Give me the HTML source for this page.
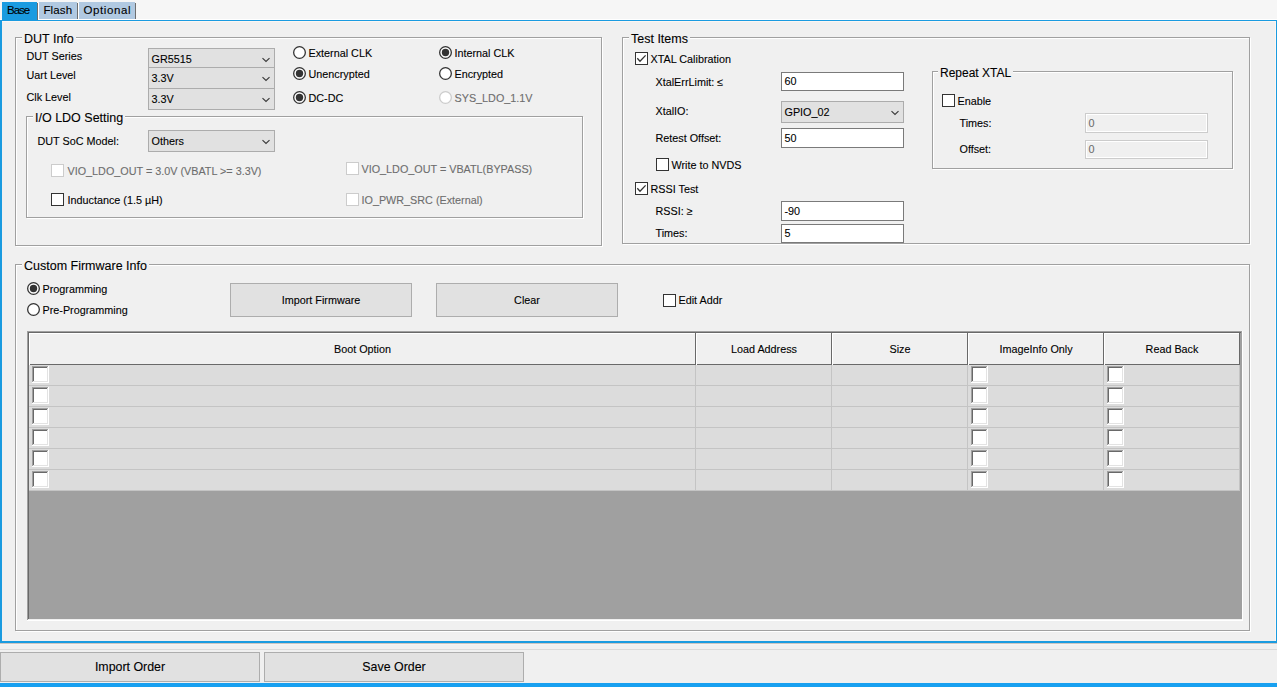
<!DOCTYPE html>
<html><head><meta charset="utf-8"><style>
html,body{margin:0;padding:0;}
body{width:1277px;height:687px;overflow:hidden;background:#f0f0f0;position:relative;font-family:"Liberation Sans",sans-serif;}
div,svg{position:absolute;box-sizing:content-box;}
.t{line-height:12px;white-space:nowrap;-webkit-text-stroke:0.1px currentColor;}
</style></head><body>
<div style="left:0px;top:0px;width:1277px;height:19px;background:#f6f6f6;"></div>
<div style="left:0px;top:19px;width:1277px;height:1px;background:#ffffff;"></div>
<div style="left:2px;top:2px;width:35px;height:18px;background:#1a9be0;"></div>
<div style="left:37px;top:3px;width:1px;height:17px;background:#6e6e6e;"></div>
<div class="t" style="left:7.0px;top:4px;font-size:11.5px;color:#000;letter-spacing:-1px;">Base</div>
<div style="left:39px;top:2px;width:38px;height:17px;background:#b1c9e1;"></div>
<div style="left:38px;top:3px;width:1px;height:16px;background:#ffffff;"></div>
<div style="left:77px;top:3px;width:1px;height:16px;background:#6e6e6e;"></div>
<div class="t" style="left:43.5px;top:4px;font-size:11.5px;color:#000;letter-spacing:0.1px;">Flash</div>
<div style="left:79px;top:2px;width:56px;height:17px;background:#b1c9e1;"></div>
<div style="left:78px;top:3px;width:1px;height:16px;background:#ffffff;"></div>
<div style="left:135px;top:3px;width:1px;height:16px;background:#6e6e6e;"></div>
<div class="t" style="left:83.5px;top:4px;font-size:11.5px;color:#000;letter-spacing:0.6px;">Optional</div>
<div style="left:0px;top:20px;width:1277px;height:1px;background:#1a9be0;"></div>
<div style="left:0px;top:20px;width:2px;height:623px;background:#1a9be0;"></div>
<div style="left:1276px;top:20px;width:1px;height:623px;background:#1a9be0;"></div>
<div style="left:0px;top:641px;width:1277px;height:2px;background:#1a9be0;"></div>
<div style="left:2px;top:21px;width:1274px;height:1px;background:#fdf6f2;"></div>
<div style="left:1275px;top:21px;width:1px;height:620px;background:#fdf6f2;"></div>
<div style="left:0px;top:643px;width:1277px;height:1px;background:#cdc6c1;"></div>
<div style="left:0px;top:644px;width:1277px;height:1px;background:#f4f4f4;"></div>
<div style="left:0px;top:649px;width:1277px;height:1px;background:#dadada;"></div>
<div style="left:0px;top:683px;width:1277px;height:4px;background:#18a0f0;"></div>
<div style="left:16px;top:38px;width:587px;height:209px;border:1px solid #fff;width:585px;height:207px;"></div>
<div style="left:15px;top:37px;width:587px;height:209px;border:1px solid #a0a0a0;width:585px;height:207px;"></div>
<div class="t" style="left:22px;top:33px;font-size:12.5px;background:#f0f0f0;padding:0 2px 0 2px;">DUT Info</div>
<div class="t" style="left:26.5px;top:50px;font-size:10.8px;color:#000;">DUT Series</div>
<div class="t" style="left:26.5px;top:69px;font-size:10.8px;color:#000;">Uart Level</div>
<div class="t" style="left:26.5px;top:91px;font-size:10.8px;color:#000;">Clk Level</div>
<div style="left:148px;top:48px;width:127px;height:20px;background:#e1e1e1;border:1px solid #acacac;width:125px;height:18px;"></div>
<div class="t" style="left:151.5px;top:53px;font-size:10.8px;color:#000;">GR5515</div>
<svg style="left:262px;top:57px;" width="9" height="7" viewBox="0 0 9 7"><path d="M0.5 1.1 L4 4.5 L7.5 1.1" fill="none" stroke="#3a3a3a" stroke-width="1.15"/></svg>
<div style="left:148px;top:67px;width:127px;height:22px;background:#e1e1e1;border:1px solid #acacac;width:125px;height:20px;"></div>
<div class="t" style="left:151.5px;top:72px;font-size:10.8px;color:#000;">3.3V</div>
<svg style="left:262px;top:76px;" width="9" height="7" viewBox="0 0 9 7"><path d="M0.5 1.1 L4 4.5 L7.5 1.1" fill="none" stroke="#3a3a3a" stroke-width="1.15"/></svg>
<div style="left:148px;top:88px;width:127px;height:22px;background:#e1e1e1;border:1px solid #acacac;width:125px;height:20px;"></div>
<div class="t" style="left:151.5px;top:93px;font-size:10.8px;color:#000;">3.3V</div>
<svg style="left:262px;top:97px;" width="9" height="7" viewBox="0 0 9 7"><path d="M0.5 1.1 L4 4.5 L7.5 1.1" fill="none" stroke="#3a3a3a" stroke-width="1.15"/></svg>
<svg style="left:292px;top:45px;" width="15" height="15" viewBox="0 0 15 15"><circle cx="7.5" cy="7.5" r="5.85" fill="#fff" stroke="#333333" stroke-width="1.3"/></svg>
<div class="t" style="left:308.5px;top:47px;font-size:10.8px;color:#000;">External CLK</div>
<svg style="left:292px;top:66px;" width="15" height="15" viewBox="0 0 15 15"><circle cx="7.5" cy="7.5" r="5.85" fill="#fff" stroke="#333333" stroke-width="1.3"/><circle cx="7.5" cy="7.5" r="3.7" fill="#333333"/></svg>
<div class="t" style="left:308.5px;top:68px;font-size:10.8px;color:#000;">Unencrypted</div>
<svg style="left:292px;top:90px;" width="15" height="15" viewBox="0 0 15 15"><circle cx="7.5" cy="7.5" r="5.85" fill="#fff" stroke="#333333" stroke-width="1.3"/><circle cx="7.5" cy="7.5" r="3.7" fill="#333333"/></svg>
<div class="t" style="left:308.5px;top:92px;font-size:10.8px;color:#000;">DC-DC</div>
<svg style="left:438px;top:45px;" width="15" height="15" viewBox="0 0 15 15"><circle cx="7.5" cy="7.5" r="5.85" fill="#fff" stroke="#333333" stroke-width="1.3"/><circle cx="7.5" cy="7.5" r="3.7" fill="#333333"/></svg>
<div class="t" style="left:454.5px;top:47px;font-size:10.8px;color:#000;">Internal CLK</div>
<svg style="left:438px;top:66px;" width="15" height="15" viewBox="0 0 15 15"><circle cx="7.5" cy="7.5" r="5.85" fill="#fff" stroke="#333333" stroke-width="1.3"/></svg>
<div class="t" style="left:454.5px;top:68px;font-size:10.8px;color:#000;">Encrypted</div>
<svg style="left:438px;top:90px;" width="15" height="15" viewBox="0 0 15 15"><circle cx="7.5" cy="7.5" r="5.85" fill="#fff" stroke="#cccccc" stroke-width="1.3"/></svg>
<div class="t" style="left:454.5px;top:92px;font-size:10.8px;color:#6d6d6d;">SYS_LDO_1.1V</div>
<div style="left:27px;top:117px;width:557px;height:102px;border:1px solid #fff;width:555px;height:100px;"></div>
<div style="left:26px;top:116px;width:557px;height:102px;border:1px solid #a0a0a0;width:555px;height:100px;"></div>
<div class="t" style="left:33px;top:112px;font-size:12.5px;background:#f0f0f0;padding:0 2px 0 2px;">I/O LDO Setting</div>
<div class="t" style="left:37.5px;top:135px;font-size:10.8px;color:#000;">DUT SoC Model:</div>
<div style="left:148px;top:130px;width:127px;height:22px;background:#e1e1e1;border:1px solid #acacac;width:125px;height:20px;"></div>
<div class="t" style="left:151.5px;top:135px;font-size:10.8px;color:#000;">Others</div>
<svg style="left:262px;top:139px;" width="9" height="7" viewBox="0 0 9 7"><path d="M0.5 1.1 L4 4.5 L7.5 1.1" fill="none" stroke="#3a3a3a" stroke-width="1.15"/></svg>
<div style="left:51px;top:164px;width:13px;height:13px;background:#fff;border:1px solid #cccccc;width:11px;height:11px;"></div>
<div class="t" style="left:67.5px;top:165px;font-size:10.8px;color:#6d6d6d;">VIO_LDO_OUT = 3.0V (VBATL &gt;= 3.3V)</div>
<div style="left:51px;top:193px;width:13px;height:13px;background:#fff;border:1px solid #333333;width:11px;height:11px;"></div>
<div class="t" style="left:67.5px;top:194px;font-size:10.8px;color:#000;">Inductance (1.5 µH)</div>
<div style="left:346px;top:162px;width:13px;height:13px;background:#fff;border:1px solid #cccccc;width:11px;height:11px;"></div>
<div class="t" style="left:361.5px;top:163px;font-size:10.8px;color:#6d6d6d;">VIO_LDO_OUT = VBATL(BYPASS)</div>
<div style="left:346px;top:193px;width:13px;height:13px;background:#fff;border:1px solid #cccccc;width:11px;height:11px;"></div>
<div class="t" style="left:361.5px;top:194px;font-size:10.8px;color:#6d6d6d;">IO_PWR_SRC (External)</div>
<div style="left:623px;top:38px;width:628px;height:207px;border:1px solid #fff;width:626px;height:205px;"></div>
<div style="left:622px;top:37px;width:628px;height:207px;border:1px solid #a0a0a0;width:626px;height:205px;"></div>
<div class="t" style="left:629px;top:33px;font-size:12.5px;background:#f0f0f0;padding:0 2px 0 2px;">Test Items</div>
<div style="left:635px;top:52px;width:13px;height:13px;background:#fff;border:1px solid #333333;width:11px;height:11px;"></div>
<svg style="left:635px;top:52px;" width="13" height="13" viewBox="0 0 13 13"><path d="M2.3 6.3 L5 9.2 L10.6 3.4" fill="none" stroke="#333" stroke-width="1.3"/></svg>
<div class="t" style="left:650.5px;top:53px;font-size:10.8px;color:#000;">XTAL Calibration</div>
<div class="t" style="left:655.5px;top:76px;font-size:10.8px;color:#000;">XtalErrLimit: ≤</div>
<div style="left:781px;top:72px;width:123px;height:19px;background:#fff;border:1px solid #7a7a7a;width:121px;height:17px;"></div>
<div class="t" style="left:784.5px;top:75px;font-size:10.8px;color:#000;">60</div>
<div class="t" style="left:655.5px;top:105px;font-size:10.8px;color:#000;">XtalIO:</div>
<div style="left:781px;top:101px;width:123px;height:22px;background:#e1e1e1;border:1px solid #acacac;width:121px;height:20px;"></div>
<div class="t" style="left:784.5px;top:106px;font-size:10.8px;color:#000;">GPIO_02</div>
<svg style="left:891px;top:110px;" width="9" height="7" viewBox="0 0 9 7"><path d="M0.5 1.1 L4 4.5 L7.5 1.1" fill="none" stroke="#3a3a3a" stroke-width="1.15"/></svg>
<div class="t" style="left:655.5px;top:132px;font-size:10.8px;color:#000;">Retest Offset:</div>
<div style="left:781px;top:128px;width:123px;height:20px;background:#fff;border:1px solid #7a7a7a;width:121px;height:18px;"></div>
<div class="t" style="left:784.5px;top:132px;font-size:10.8px;color:#000;">50</div>
<div style="left:656px;top:158px;width:13px;height:13px;background:#fff;border:1px solid #333333;width:11px;height:11px;"></div>
<div class="t" style="left:671.5px;top:159px;font-size:10.8px;color:#000;">Write to NVDS</div>
<div style="left:635px;top:182px;width:13px;height:13px;background:#fff;border:1px solid #333333;width:11px;height:11px;"></div>
<svg style="left:635px;top:182px;" width="13" height="13" viewBox="0 0 13 13"><path d="M2.3 6.3 L5 9.2 L10.6 3.4" fill="none" stroke="#333" stroke-width="1.3"/></svg>
<div class="t" style="left:650.5px;top:183px;font-size:10.8px;color:#000;">RSSI Test</div>
<div class="t" style="left:655.5px;top:205px;font-size:10.8px;color:#000;">RSSI: ≥</div>
<div style="left:781px;top:201px;width:123px;height:20px;background:#fff;border:1px solid #7a7a7a;width:121px;height:18px;"></div>
<div class="t" style="left:784.5px;top:205px;font-size:10.8px;color:#000;">-90</div>
<div class="t" style="left:655.5px;top:227px;font-size:10.8px;color:#000;">Times:</div>
<div style="left:781px;top:224px;width:123px;height:19px;background:#fff;border:1px solid #7a7a7a;width:121px;height:17px;"></div>
<div class="t" style="left:784.5px;top:227px;font-size:10.8px;color:#000;">5</div>
<div style="left:933px;top:72px;width:301px;height:98px;border:1px solid #fff;width:299px;height:96px;"></div>
<div style="left:932px;top:71px;width:301px;height:98px;border:1px solid #a0a0a0;width:299px;height:96px;"></div>
<div class="t" style="left:938px;top:67px;font-size:12px;background:#f0f0f0;padding:0 2px 0 2px;">Repeat XTAL</div>
<div style="left:942px;top:94px;width:13px;height:13px;background:#fff;border:1px solid #333333;width:11px;height:11px;"></div>
<div class="t" style="left:957.5px;top:95px;font-size:10.8px;color:#000;">Enable</div>
<div class="t" style="left:959.5px;top:117px;font-size:10.8px;color:#000;">Times:</div>
<div class="t" style="left:959.5px;top:143px;font-size:10.8px;color:#000;">Offset:</div>
<div style="left:1085px;top:113px;width:123px;height:20px;background:#f0f0f0;border:1px solid #cccccc;width:121px;height:18px;box-shadow:inset 0 0 0 1px #fff;"></div>
<div class="t" style="left:1088.5px;top:117px;font-size:10.8px;color:#6d6d6d;">0</div>
<div style="left:1085px;top:140px;width:123px;height:19px;background:#f0f0f0;border:1px solid #cccccc;width:121px;height:17px;box-shadow:inset 0 0 0 1px #fff;"></div>
<div class="t" style="left:1088.5px;top:143px;font-size:10.8px;color:#6d6d6d;">0</div>
<div style="left:16px;top:265px;width:1235px;height:367px;border:1px solid #fff;width:1233px;height:365px;"></div>
<div style="left:15px;top:264px;width:1235px;height:367px;border:1px solid #a0a0a0;width:1233px;height:365px;"></div>
<div class="t" style="left:22px;top:260px;font-size:12.5px;background:#f0f0f0;padding:0 2px 0 2px;">Custom Firmware Info</div>
<svg style="left:26px;top:281px;" width="15" height="15" viewBox="0 0 15 15"><circle cx="7.5" cy="7.5" r="5.85" fill="#fff" stroke="#333333" stroke-width="1.3"/><circle cx="7.5" cy="7.5" r="3.7" fill="#333333"/></svg>
<div class="t" style="left:42.5px;top:283px;font-size:10.8px;color:#000;">Programming</div>
<svg style="left:26px;top:302px;" width="15" height="15" viewBox="0 0 15 15"><circle cx="7.5" cy="7.5" r="5.85" fill="#fff" stroke="#333333" stroke-width="1.3"/></svg>
<div class="t" style="left:42.5px;top:304px;font-size:10.8px;color:#000;">Pre-Programming</div>
<div style="left:230px;top:283px;width:182px;height:34px;background:#e1e1e1;border:1px solid #adadad;width:180px;height:32px;"></div>
<div class="t" style="left:230px;top:294px;width:182px;text-align:center;font-size:10.8px;color:#000">Import Firmware</div>
<div style="left:436px;top:283px;width:182px;height:34px;background:#e1e1e1;border:1px solid #adadad;width:180px;height:32px;"></div>
<div class="t" style="left:436px;top:294px;width:182px;text-align:center;font-size:10.8px;color:#000">Clear</div>
<div style="left:663px;top:294px;width:13px;height:13px;background:#fff;border:1px solid #333333;width:11px;height:11px;"></div>
<div class="t" style="left:678.5px;top:294px;font-size:10.8px;color:#000;">Edit Addr</div>
<div style="left:27px;top:331px;width:1216px;height:290px;background:#ffffff;"></div>
<div style="left:27px;top:331px;width:1215px;height:289px;background:#a0a0a0;"></div>
<div style="left:27px;top:331px;width:1215px;height:1px;background:#a0a0a0;"></div>
<div style="left:27px;top:331px;width:1px;height:289px;background:#a0a0a0;"></div>
<div style="left:28px;top:332px;width:1213px;height:1px;background:#696969;"></div>
<div style="left:28px;top:332px;width:1px;height:287px;background:#696969;"></div>
<div style="left:28px;top:619px;width:1214px;height:1px;background:#f0f0f0;"></div>
<div style="left:29px;top:333px;width:667px;height:32px;background:#f0f0f0;"></div>
<div style="left:29px;top:333px;width:666px;height:1px;background:#ffffff;"></div>
<div style="left:29px;top:333px;width:1px;height:32px;background:#ffffff;"></div>
<div style="left:695px;top:333px;width:1px;height:32px;background:#696969;"></div>
<div style="left:30px;top:364px;width:666px;height:1px;background:#696969;"></div>
<div class="t" style="left:29px;top:343px;width:667px;text-align:center;font-size:10.8px;color:#000">Boot Option</div>
<div style="left:696px;top:333px;width:136px;height:32px;background:#f0f0f0;"></div>
<div style="left:696px;top:333px;width:135px;height:1px;background:#ffffff;"></div>
<div style="left:696px;top:333px;width:1px;height:32px;background:#ffffff;"></div>
<div style="left:831px;top:333px;width:1px;height:32px;background:#696969;"></div>
<div style="left:697px;top:364px;width:135px;height:1px;background:#696969;"></div>
<div class="t" style="left:696px;top:343px;width:136px;text-align:center;font-size:10.8px;color:#000">Load Address</div>
<div style="left:832px;top:333px;width:136px;height:32px;background:#f0f0f0;"></div>
<div style="left:832px;top:333px;width:135px;height:1px;background:#ffffff;"></div>
<div style="left:832px;top:333px;width:1px;height:32px;background:#ffffff;"></div>
<div style="left:967px;top:333px;width:1px;height:32px;background:#696969;"></div>
<div style="left:833px;top:364px;width:135px;height:1px;background:#696969;"></div>
<div class="t" style="left:832px;top:343px;width:136px;text-align:center;font-size:10.8px;color:#000">Size</div>
<div style="left:968px;top:333px;width:136px;height:32px;background:#f0f0f0;"></div>
<div style="left:968px;top:333px;width:135px;height:1px;background:#ffffff;"></div>
<div style="left:968px;top:333px;width:1px;height:32px;background:#ffffff;"></div>
<div style="left:1103px;top:333px;width:1px;height:32px;background:#696969;"></div>
<div style="left:969px;top:364px;width:135px;height:1px;background:#696969;"></div>
<div class="t" style="left:968px;top:343px;width:136px;text-align:center;font-size:10.8px;color:#000">ImageInfo Only</div>
<div style="left:1104px;top:333px;width:136px;height:32px;background:#f0f0f0;"></div>
<div style="left:1104px;top:333px;width:135px;height:1px;background:#ffffff;"></div>
<div style="left:1104px;top:333px;width:1px;height:32px;background:#ffffff;"></div>
<div style="left:1239px;top:333px;width:1px;height:32px;background:#696969;"></div>
<div style="left:1105px;top:364px;width:135px;height:1px;background:#696969;"></div>
<div class="t" style="left:1104px;top:343px;width:136px;text-align:center;font-size:10.8px;color:#000">Read Back</div>
<div style="left:29px;top:365px;width:667px;height:21px;background:#dcdcdc;"></div>
<div style="left:29px;top:385px;width:667px;height:1px;background:#c4c4c4;"></div>
<div style="left:695px;top:365px;width:1px;height:21px;background:#c4c4c4;"></div>
<div style="left:32px;top:366px;width:17px;height:17px;background:#fff;"></div>
<div style="left:32px;top:366px;width:16px;height:1px;background:#a0a0a0;"></div>
<div style="left:32px;top:366px;width:1px;height:16px;background:#a0a0a0;"></div>
<div style="left:33px;top:367px;width:14px;height:1px;background:#696969;"></div>
<div style="left:33px;top:367px;width:1px;height:14px;background:#696969;"></div>
<div style="left:33px;top:381px;width:15px;height:1px;background:#e3e3e3;"></div>
<div style="left:47px;top:367px;width:1px;height:15px;background:#e3e3e3;"></div>
<div style="left:696px;top:365px;width:136px;height:21px;background:#dcdcdc;"></div>
<div style="left:696px;top:385px;width:136px;height:1px;background:#c4c4c4;"></div>
<div style="left:831px;top:365px;width:1px;height:21px;background:#c4c4c4;"></div>
<div style="left:832px;top:365px;width:136px;height:21px;background:#dcdcdc;"></div>
<div style="left:832px;top:385px;width:136px;height:1px;background:#c4c4c4;"></div>
<div style="left:967px;top:365px;width:1px;height:21px;background:#c4c4c4;"></div>
<div style="left:968px;top:365px;width:136px;height:21px;background:#dcdcdc;"></div>
<div style="left:968px;top:385px;width:136px;height:1px;background:#c4c4c4;"></div>
<div style="left:1103px;top:365px;width:1px;height:21px;background:#c4c4c4;"></div>
<div style="left:971px;top:366px;width:17px;height:17px;background:#fff;"></div>
<div style="left:971px;top:366px;width:16px;height:1px;background:#a0a0a0;"></div>
<div style="left:971px;top:366px;width:1px;height:16px;background:#a0a0a0;"></div>
<div style="left:972px;top:367px;width:14px;height:1px;background:#696969;"></div>
<div style="left:972px;top:367px;width:1px;height:14px;background:#696969;"></div>
<div style="left:972px;top:381px;width:15px;height:1px;background:#e3e3e3;"></div>
<div style="left:986px;top:367px;width:1px;height:15px;background:#e3e3e3;"></div>
<div style="left:1104px;top:365px;width:136px;height:21px;background:#dcdcdc;"></div>
<div style="left:1104px;top:385px;width:136px;height:1px;background:#c4c4c4;"></div>
<div style="left:1239px;top:365px;width:1px;height:21px;background:#c4c4c4;"></div>
<div style="left:1107px;top:366px;width:17px;height:17px;background:#fff;"></div>
<div style="left:1107px;top:366px;width:16px;height:1px;background:#a0a0a0;"></div>
<div style="left:1107px;top:366px;width:1px;height:16px;background:#a0a0a0;"></div>
<div style="left:1108px;top:367px;width:14px;height:1px;background:#696969;"></div>
<div style="left:1108px;top:367px;width:1px;height:14px;background:#696969;"></div>
<div style="left:1108px;top:381px;width:15px;height:1px;background:#e3e3e3;"></div>
<div style="left:1122px;top:367px;width:1px;height:15px;background:#e3e3e3;"></div>
<div style="left:29px;top:386px;width:667px;height:21px;background:#dcdcdc;"></div>
<div style="left:29px;top:406px;width:667px;height:1px;background:#c4c4c4;"></div>
<div style="left:695px;top:386px;width:1px;height:21px;background:#c4c4c4;"></div>
<div style="left:32px;top:387px;width:17px;height:17px;background:#fff;"></div>
<div style="left:32px;top:387px;width:16px;height:1px;background:#a0a0a0;"></div>
<div style="left:32px;top:387px;width:1px;height:16px;background:#a0a0a0;"></div>
<div style="left:33px;top:388px;width:14px;height:1px;background:#696969;"></div>
<div style="left:33px;top:388px;width:1px;height:14px;background:#696969;"></div>
<div style="left:33px;top:402px;width:15px;height:1px;background:#e3e3e3;"></div>
<div style="left:47px;top:388px;width:1px;height:15px;background:#e3e3e3;"></div>
<div style="left:696px;top:386px;width:136px;height:21px;background:#dcdcdc;"></div>
<div style="left:696px;top:406px;width:136px;height:1px;background:#c4c4c4;"></div>
<div style="left:831px;top:386px;width:1px;height:21px;background:#c4c4c4;"></div>
<div style="left:832px;top:386px;width:136px;height:21px;background:#dcdcdc;"></div>
<div style="left:832px;top:406px;width:136px;height:1px;background:#c4c4c4;"></div>
<div style="left:967px;top:386px;width:1px;height:21px;background:#c4c4c4;"></div>
<div style="left:968px;top:386px;width:136px;height:21px;background:#dcdcdc;"></div>
<div style="left:968px;top:406px;width:136px;height:1px;background:#c4c4c4;"></div>
<div style="left:1103px;top:386px;width:1px;height:21px;background:#c4c4c4;"></div>
<div style="left:971px;top:387px;width:17px;height:17px;background:#fff;"></div>
<div style="left:971px;top:387px;width:16px;height:1px;background:#a0a0a0;"></div>
<div style="left:971px;top:387px;width:1px;height:16px;background:#a0a0a0;"></div>
<div style="left:972px;top:388px;width:14px;height:1px;background:#696969;"></div>
<div style="left:972px;top:388px;width:1px;height:14px;background:#696969;"></div>
<div style="left:972px;top:402px;width:15px;height:1px;background:#e3e3e3;"></div>
<div style="left:986px;top:388px;width:1px;height:15px;background:#e3e3e3;"></div>
<div style="left:1104px;top:386px;width:136px;height:21px;background:#dcdcdc;"></div>
<div style="left:1104px;top:406px;width:136px;height:1px;background:#c4c4c4;"></div>
<div style="left:1239px;top:386px;width:1px;height:21px;background:#c4c4c4;"></div>
<div style="left:1107px;top:387px;width:17px;height:17px;background:#fff;"></div>
<div style="left:1107px;top:387px;width:16px;height:1px;background:#a0a0a0;"></div>
<div style="left:1107px;top:387px;width:1px;height:16px;background:#a0a0a0;"></div>
<div style="left:1108px;top:388px;width:14px;height:1px;background:#696969;"></div>
<div style="left:1108px;top:388px;width:1px;height:14px;background:#696969;"></div>
<div style="left:1108px;top:402px;width:15px;height:1px;background:#e3e3e3;"></div>
<div style="left:1122px;top:388px;width:1px;height:15px;background:#e3e3e3;"></div>
<div style="left:29px;top:407px;width:667px;height:21px;background:#dcdcdc;"></div>
<div style="left:29px;top:427px;width:667px;height:1px;background:#c4c4c4;"></div>
<div style="left:695px;top:407px;width:1px;height:21px;background:#c4c4c4;"></div>
<div style="left:32px;top:408px;width:17px;height:17px;background:#fff;"></div>
<div style="left:32px;top:408px;width:16px;height:1px;background:#a0a0a0;"></div>
<div style="left:32px;top:408px;width:1px;height:16px;background:#a0a0a0;"></div>
<div style="left:33px;top:409px;width:14px;height:1px;background:#696969;"></div>
<div style="left:33px;top:409px;width:1px;height:14px;background:#696969;"></div>
<div style="left:33px;top:423px;width:15px;height:1px;background:#e3e3e3;"></div>
<div style="left:47px;top:409px;width:1px;height:15px;background:#e3e3e3;"></div>
<div style="left:696px;top:407px;width:136px;height:21px;background:#dcdcdc;"></div>
<div style="left:696px;top:427px;width:136px;height:1px;background:#c4c4c4;"></div>
<div style="left:831px;top:407px;width:1px;height:21px;background:#c4c4c4;"></div>
<div style="left:832px;top:407px;width:136px;height:21px;background:#dcdcdc;"></div>
<div style="left:832px;top:427px;width:136px;height:1px;background:#c4c4c4;"></div>
<div style="left:967px;top:407px;width:1px;height:21px;background:#c4c4c4;"></div>
<div style="left:968px;top:407px;width:136px;height:21px;background:#dcdcdc;"></div>
<div style="left:968px;top:427px;width:136px;height:1px;background:#c4c4c4;"></div>
<div style="left:1103px;top:407px;width:1px;height:21px;background:#c4c4c4;"></div>
<div style="left:971px;top:408px;width:17px;height:17px;background:#fff;"></div>
<div style="left:971px;top:408px;width:16px;height:1px;background:#a0a0a0;"></div>
<div style="left:971px;top:408px;width:1px;height:16px;background:#a0a0a0;"></div>
<div style="left:972px;top:409px;width:14px;height:1px;background:#696969;"></div>
<div style="left:972px;top:409px;width:1px;height:14px;background:#696969;"></div>
<div style="left:972px;top:423px;width:15px;height:1px;background:#e3e3e3;"></div>
<div style="left:986px;top:409px;width:1px;height:15px;background:#e3e3e3;"></div>
<div style="left:1104px;top:407px;width:136px;height:21px;background:#dcdcdc;"></div>
<div style="left:1104px;top:427px;width:136px;height:1px;background:#c4c4c4;"></div>
<div style="left:1239px;top:407px;width:1px;height:21px;background:#c4c4c4;"></div>
<div style="left:1107px;top:408px;width:17px;height:17px;background:#fff;"></div>
<div style="left:1107px;top:408px;width:16px;height:1px;background:#a0a0a0;"></div>
<div style="left:1107px;top:408px;width:1px;height:16px;background:#a0a0a0;"></div>
<div style="left:1108px;top:409px;width:14px;height:1px;background:#696969;"></div>
<div style="left:1108px;top:409px;width:1px;height:14px;background:#696969;"></div>
<div style="left:1108px;top:423px;width:15px;height:1px;background:#e3e3e3;"></div>
<div style="left:1122px;top:409px;width:1px;height:15px;background:#e3e3e3;"></div>
<div style="left:29px;top:428px;width:667px;height:21px;background:#dcdcdc;"></div>
<div style="left:29px;top:448px;width:667px;height:1px;background:#c4c4c4;"></div>
<div style="left:695px;top:428px;width:1px;height:21px;background:#c4c4c4;"></div>
<div style="left:32px;top:429px;width:17px;height:17px;background:#fff;"></div>
<div style="left:32px;top:429px;width:16px;height:1px;background:#a0a0a0;"></div>
<div style="left:32px;top:429px;width:1px;height:16px;background:#a0a0a0;"></div>
<div style="left:33px;top:430px;width:14px;height:1px;background:#696969;"></div>
<div style="left:33px;top:430px;width:1px;height:14px;background:#696969;"></div>
<div style="left:33px;top:444px;width:15px;height:1px;background:#e3e3e3;"></div>
<div style="left:47px;top:430px;width:1px;height:15px;background:#e3e3e3;"></div>
<div style="left:696px;top:428px;width:136px;height:21px;background:#dcdcdc;"></div>
<div style="left:696px;top:448px;width:136px;height:1px;background:#c4c4c4;"></div>
<div style="left:831px;top:428px;width:1px;height:21px;background:#c4c4c4;"></div>
<div style="left:832px;top:428px;width:136px;height:21px;background:#dcdcdc;"></div>
<div style="left:832px;top:448px;width:136px;height:1px;background:#c4c4c4;"></div>
<div style="left:967px;top:428px;width:1px;height:21px;background:#c4c4c4;"></div>
<div style="left:968px;top:428px;width:136px;height:21px;background:#dcdcdc;"></div>
<div style="left:968px;top:448px;width:136px;height:1px;background:#c4c4c4;"></div>
<div style="left:1103px;top:428px;width:1px;height:21px;background:#c4c4c4;"></div>
<div style="left:971px;top:429px;width:17px;height:17px;background:#fff;"></div>
<div style="left:971px;top:429px;width:16px;height:1px;background:#a0a0a0;"></div>
<div style="left:971px;top:429px;width:1px;height:16px;background:#a0a0a0;"></div>
<div style="left:972px;top:430px;width:14px;height:1px;background:#696969;"></div>
<div style="left:972px;top:430px;width:1px;height:14px;background:#696969;"></div>
<div style="left:972px;top:444px;width:15px;height:1px;background:#e3e3e3;"></div>
<div style="left:986px;top:430px;width:1px;height:15px;background:#e3e3e3;"></div>
<div style="left:1104px;top:428px;width:136px;height:21px;background:#dcdcdc;"></div>
<div style="left:1104px;top:448px;width:136px;height:1px;background:#c4c4c4;"></div>
<div style="left:1239px;top:428px;width:1px;height:21px;background:#c4c4c4;"></div>
<div style="left:1107px;top:429px;width:17px;height:17px;background:#fff;"></div>
<div style="left:1107px;top:429px;width:16px;height:1px;background:#a0a0a0;"></div>
<div style="left:1107px;top:429px;width:1px;height:16px;background:#a0a0a0;"></div>
<div style="left:1108px;top:430px;width:14px;height:1px;background:#696969;"></div>
<div style="left:1108px;top:430px;width:1px;height:14px;background:#696969;"></div>
<div style="left:1108px;top:444px;width:15px;height:1px;background:#e3e3e3;"></div>
<div style="left:1122px;top:430px;width:1px;height:15px;background:#e3e3e3;"></div>
<div style="left:29px;top:449px;width:667px;height:21px;background:#dcdcdc;"></div>
<div style="left:29px;top:469px;width:667px;height:1px;background:#c4c4c4;"></div>
<div style="left:695px;top:449px;width:1px;height:21px;background:#c4c4c4;"></div>
<div style="left:32px;top:450px;width:17px;height:17px;background:#fff;"></div>
<div style="left:32px;top:450px;width:16px;height:1px;background:#a0a0a0;"></div>
<div style="left:32px;top:450px;width:1px;height:16px;background:#a0a0a0;"></div>
<div style="left:33px;top:451px;width:14px;height:1px;background:#696969;"></div>
<div style="left:33px;top:451px;width:1px;height:14px;background:#696969;"></div>
<div style="left:33px;top:465px;width:15px;height:1px;background:#e3e3e3;"></div>
<div style="left:47px;top:451px;width:1px;height:15px;background:#e3e3e3;"></div>
<div style="left:696px;top:449px;width:136px;height:21px;background:#dcdcdc;"></div>
<div style="left:696px;top:469px;width:136px;height:1px;background:#c4c4c4;"></div>
<div style="left:831px;top:449px;width:1px;height:21px;background:#c4c4c4;"></div>
<div style="left:832px;top:449px;width:136px;height:21px;background:#dcdcdc;"></div>
<div style="left:832px;top:469px;width:136px;height:1px;background:#c4c4c4;"></div>
<div style="left:967px;top:449px;width:1px;height:21px;background:#c4c4c4;"></div>
<div style="left:968px;top:449px;width:136px;height:21px;background:#dcdcdc;"></div>
<div style="left:968px;top:469px;width:136px;height:1px;background:#c4c4c4;"></div>
<div style="left:1103px;top:449px;width:1px;height:21px;background:#c4c4c4;"></div>
<div style="left:971px;top:450px;width:17px;height:17px;background:#fff;"></div>
<div style="left:971px;top:450px;width:16px;height:1px;background:#a0a0a0;"></div>
<div style="left:971px;top:450px;width:1px;height:16px;background:#a0a0a0;"></div>
<div style="left:972px;top:451px;width:14px;height:1px;background:#696969;"></div>
<div style="left:972px;top:451px;width:1px;height:14px;background:#696969;"></div>
<div style="left:972px;top:465px;width:15px;height:1px;background:#e3e3e3;"></div>
<div style="left:986px;top:451px;width:1px;height:15px;background:#e3e3e3;"></div>
<div style="left:1104px;top:449px;width:136px;height:21px;background:#dcdcdc;"></div>
<div style="left:1104px;top:469px;width:136px;height:1px;background:#c4c4c4;"></div>
<div style="left:1239px;top:449px;width:1px;height:21px;background:#c4c4c4;"></div>
<div style="left:1107px;top:450px;width:17px;height:17px;background:#fff;"></div>
<div style="left:1107px;top:450px;width:16px;height:1px;background:#a0a0a0;"></div>
<div style="left:1107px;top:450px;width:1px;height:16px;background:#a0a0a0;"></div>
<div style="left:1108px;top:451px;width:14px;height:1px;background:#696969;"></div>
<div style="left:1108px;top:451px;width:1px;height:14px;background:#696969;"></div>
<div style="left:1108px;top:465px;width:15px;height:1px;background:#e3e3e3;"></div>
<div style="left:1122px;top:451px;width:1px;height:15px;background:#e3e3e3;"></div>
<div style="left:29px;top:470px;width:667px;height:21px;background:#dcdcdc;"></div>
<div style="left:29px;top:490px;width:667px;height:1px;background:#c4c4c4;"></div>
<div style="left:695px;top:470px;width:1px;height:21px;background:#c4c4c4;"></div>
<div style="left:32px;top:471px;width:17px;height:17px;background:#fff;"></div>
<div style="left:32px;top:471px;width:16px;height:1px;background:#a0a0a0;"></div>
<div style="left:32px;top:471px;width:1px;height:16px;background:#a0a0a0;"></div>
<div style="left:33px;top:472px;width:14px;height:1px;background:#696969;"></div>
<div style="left:33px;top:472px;width:1px;height:14px;background:#696969;"></div>
<div style="left:33px;top:486px;width:15px;height:1px;background:#e3e3e3;"></div>
<div style="left:47px;top:472px;width:1px;height:15px;background:#e3e3e3;"></div>
<div style="left:696px;top:470px;width:136px;height:21px;background:#dcdcdc;"></div>
<div style="left:696px;top:490px;width:136px;height:1px;background:#c4c4c4;"></div>
<div style="left:831px;top:470px;width:1px;height:21px;background:#c4c4c4;"></div>
<div style="left:832px;top:470px;width:136px;height:21px;background:#dcdcdc;"></div>
<div style="left:832px;top:490px;width:136px;height:1px;background:#c4c4c4;"></div>
<div style="left:967px;top:470px;width:1px;height:21px;background:#c4c4c4;"></div>
<div style="left:968px;top:470px;width:136px;height:21px;background:#dcdcdc;"></div>
<div style="left:968px;top:490px;width:136px;height:1px;background:#c4c4c4;"></div>
<div style="left:1103px;top:470px;width:1px;height:21px;background:#c4c4c4;"></div>
<div style="left:971px;top:471px;width:17px;height:17px;background:#fff;"></div>
<div style="left:971px;top:471px;width:16px;height:1px;background:#a0a0a0;"></div>
<div style="left:971px;top:471px;width:1px;height:16px;background:#a0a0a0;"></div>
<div style="left:972px;top:472px;width:14px;height:1px;background:#696969;"></div>
<div style="left:972px;top:472px;width:1px;height:14px;background:#696969;"></div>
<div style="left:972px;top:486px;width:15px;height:1px;background:#e3e3e3;"></div>
<div style="left:986px;top:472px;width:1px;height:15px;background:#e3e3e3;"></div>
<div style="left:1104px;top:470px;width:136px;height:21px;background:#dcdcdc;"></div>
<div style="left:1104px;top:490px;width:136px;height:1px;background:#c4c4c4;"></div>
<div style="left:1239px;top:470px;width:1px;height:21px;background:#c4c4c4;"></div>
<div style="left:1107px;top:471px;width:17px;height:17px;background:#fff;"></div>
<div style="left:1107px;top:471px;width:16px;height:1px;background:#a0a0a0;"></div>
<div style="left:1107px;top:471px;width:1px;height:16px;background:#a0a0a0;"></div>
<div style="left:1108px;top:472px;width:14px;height:1px;background:#696969;"></div>
<div style="left:1108px;top:472px;width:1px;height:14px;background:#696969;"></div>
<div style="left:1108px;top:486px;width:15px;height:1px;background:#e3e3e3;"></div>
<div style="left:1122px;top:472px;width:1px;height:15px;background:#e3e3e3;"></div>
<div style="left:0px;top:652px;width:260px;height:30px;background:#e1e1e1;border:1px solid #adadad;width:258px;height:28px;"></div>
<div class="t" style="left:0px;top:661px;width:260px;text-align:center;font-size:12.4px;color:#000">Import Order</div>
<div style="left:264px;top:652px;width:260px;height:30px;background:#e1e1e1;border:1px solid #adadad;width:258px;height:28px;"></div>
<div class="t" style="left:264px;top:661px;width:260px;text-align:center;font-size:12.4px;color:#000">Save Order</div>
</body></html>
